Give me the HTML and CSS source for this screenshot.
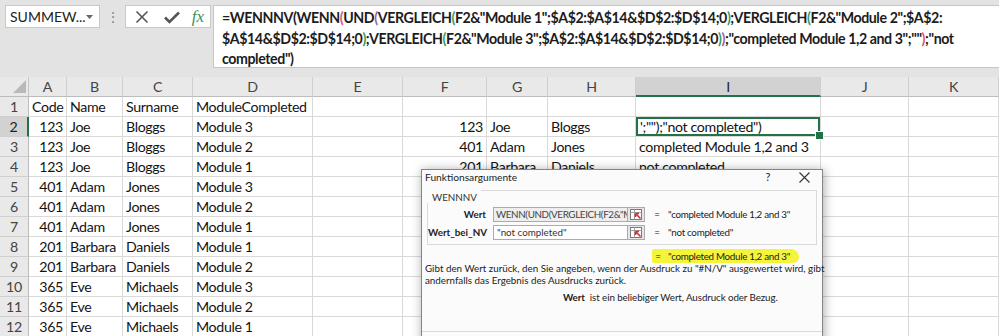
FILE: index.html
```html
<!DOCTYPE html>
<html lang="de">
<head>
<meta charset="utf-8">
<title>Excel WENNNV</title>
<link rel="stylesheet" href="styles.css">
</head>
<body>
<div class="app">
  <div class="topbar">
    <div class="namebox"><span>SUMMEW...</span><svg width="7" height="4" viewBox="0 0 7 4"><path d="M0 0h7L3.5 4z" fill="#666"/></svg></div>
    <div class="grip">⋮</div>
    <div class="fxbtns">
      <svg class="ic" width="16" height="16" viewBox="0 0 16 16"><path d="M2.5 2.5L13.5 13.5M13.5 2.5L2.5 13.5" stroke="#555" stroke-width="1.6" fill="none"/></svg>
      <svg class="ic" width="18" height="16" viewBox="0 0 18 16"><path d="M2 8.5L6.5 13L16 3.5" stroke="#555" stroke-width="2.6" fill="none"/></svg>
      <span class="fx">fx</span>
    </div>
    <div class="formula">=WENNNV(WENN<span class="p1">(</span>UND<span class="p2">(</span>VERGLEICH<span class="p3">(</span>F2&amp;"Module 1";$A$2:$A$14&amp;$D$2:$D$14;0<span class="p3">)</span>;VERGLEICH<span class="p3">(</span>F2&amp;"Module 2";$A$2:<br>$A$14&amp;$D$2:$D$14;0<span class="p3">)</span>;VERGLEICH<span class="p3">(</span>F2&amp;"Module 3";$A$2:$A$14&amp;$D$2:$D$14;0<span class="p3">)</span><span class="p2">)</span>;"completed Module 1,2 and 3";""<span class="p1">)</span>;"not<br>completed")</div>
  </div>

  <div class="sheet">
    <div class="corner"><svg width="28" height="19" viewBox="0 0 28 19"><path d="M13 16H26V3z" fill="#b9b9b9"/></svg></div>
    <div class="ch">A</div><div class="ch">B</div><div class="ch">C</div><div class="ch">D</div><div class="ch">E</div><div class="ch">F</div><div class="ch">G</div><div class="ch">H</div><div class="ch selc">I</div><div class="ch">J</div><div class="ch">K</div>

    <div class="rh">1</div><div>Code</div><div>Name</div><div>Surname</div><div>ModuleCompleted</div><div></div><div></div><div></div><div></div><div></div><div></div><div></div>
    <div class="rh selr">2</div><div class="n">123</div><div>Joe</div><div>Bloggs</div><div>Module 3</div><div></div><div class="n">123</div><div>Joe</div><div>Bloggs</div><div class="active">';"");"not completed")</div><div></div><div></div>
    <div class="rh">3</div><div class="n">123</div><div>Joe</div><div>Bloggs</div><div>Module 2</div><div></div><div class="n">401</div><div>Adam</div><div>Jones</div><div>completed Module 1,2 and 3</div><div></div><div></div>
    <div class="rh">4</div><div class="n">123</div><div>Joe</div><div>Bloggs</div><div>Module 1</div><div></div><div class="n">201</div><div>Barbara</div><div>Daniels</div><div>not completed</div><div></div><div></div>
    <div class="rh">5</div><div class="n">401</div><div>Adam</div><div>Jones</div><div>Module 3</div><div></div><div></div><div></div><div></div><div></div><div></div><div></div>
    <div class="rh">6</div><div class="n">401</div><div>Adam</div><div>Jones</div><div>Module 2</div><div></div><div></div><div></div><div></div><div></div><div></div><div></div>
    <div class="rh">7</div><div class="n">401</div><div>Adam</div><div>Jones</div><div>Module 1</div><div></div><div></div><div></div><div></div><div></div><div></div><div></div>
    <div class="rh">8</div><div class="n">201</div><div>Barbara</div><div>Daniels</div><div>Module 1</div><div></div><div></div><div></div><div></div><div></div><div></div><div></div>
    <div class="rh">9</div><div class="n">201</div><div>Barbara</div><div>Daniels</div><div>Module 2</div><div></div><div></div><div></div><div></div><div></div><div></div><div></div>
    <div class="rh">10</div><div class="n">365</div><div>Eve</div><div>Michaels</div><div>Module 3</div><div></div><div></div><div></div><div></div><div></div><div></div><div></div>
    <div class="rh">11</div><div class="n">365</div><div>Eve</div><div>Michaels</div><div>Module 2</div><div></div><div></div><div></div><div></div><div></div><div></div><div></div>
    <div class="rh">12</div><div class="n">365</div><div>Eve</div><div>Michaels</div><div>Module 1</div><div></div><div></div><div></div><div></div><div></div><div></div><div></div>
  </div>

  <div class="dialog">
    <div class="dtitle"><span class="dname">Funktionsargumente</span><span class="dq">?</span><span class="dx"><svg width="11" height="11" viewBox="0 0 11 11"><path d="M0.5 0.5L10.5 10.5M10.5 0.5L0.5 10.5" stroke="#333" stroke-width="1.1" fill="none"/></svg></span></div>
    <div class="group">
      <div class="ghead"><span class="gtext">WENNNV</span><span class="gline"></span></div>
      <div class="arg">
        <span class="lbl">Wert</span>
        <div class="inp dis">WENN(UND(VERGLEICH(F2&amp;"M</div>
        <div class="refbtn"><svg width="12" height="11" viewBox="0 0 12 11"><rect x="0.5" y="0.5" width="11" height="10" fill="#fff" stroke="#7a7a7a"/><path d="M0.5 3.5h11M4.5 0.5v10" stroke="#a0a0a0"/><path d="M10.5 9.5L5.5 4.5M5.5 4.5h3.5M5.5 4.5v3.5" stroke="#d0312d" stroke-width="1.6" fill="none"/></svg></div>
        <span class="eq">=</span><span class="val">"completed Module 1,2 and 3"</span>
      </div>
      <div class="arg">
        <span class="lbl">Wert_bei_NV</span>
        <div class="inp">"not completed"</div>
        <div class="refbtn"><svg width="12" height="11" viewBox="0 0 12 11"><rect x="0.5" y="0.5" width="11" height="10" fill="#fff" stroke="#7a7a7a"/><path d="M0.5 3.5h11M4.5 0.5v10" stroke="#a0a0a0"/><path d="M10.5 9.5L5.5 4.5M5.5 4.5h3.5M5.5 4.5v3.5" stroke="#d0312d" stroke-width="1.6" fill="none"/></svg></div>
        <span class="eq">=</span><span class="val">"not completed"</span>
      </div>
    </div>
    <div class="result"><span class="hl"><span class="eq2">=</span>"completed Module 1,2 and 3"</span></div>
    <div class="desc">Gibt den Wert zurück, den Sie angeben, wenn der Ausdruck zu "#N/V" ausgewertet wird, gibt<br>andernfalls das Ergebnis des Ausdrucks zurück.</div>
    <div class="argdesc"><b>Wert</b><span class="argtxt">ist ein beliebiger Wert, Ausdruck oder Bezug.</span></div>
    <div class="sep"></div>
  </div>
</div>
</body>
</html>
```
FILE: styles.css
```css
* { box-sizing: border-box; }
html, body { margin: 0; padding: 0; }
body { width: 999px; height: 336px; overflow: hidden; background: #fff; font-family: Lato, "Noto Sans", sans-serif; }
.app { position: relative; width: 999px; height: 336px; overflow: hidden; }

/* formula bar area */
.topbar { height: 77px; background: #e3e3e3; display: flex; align-items: flex-start; padding: 5px 0 0 5px; }
.namebox { width: 95px; height: 23px; background: #fff; border: 1px solid #c9c9c9; display: flex; align-items: center; justify-content: space-between; padding: 0 6px 0 4px; font-size: 14px; color: #222; }
.grip { width: 25px; text-align: center; color: #8a8a8a; font-size: 14px; line-height: 23px; }
.fxbtns { width: 86px; height: 23px; background: #fff; border: 1px solid #c9c9c9; display: flex; align-items: center; justify-content: space-between; padding: 0 6px 0 8px; }
.fxbtns .ic + .ic { margin-left: 2px; }
.fx { font-family: "Liberation Serif", serif; font-style: italic; font-size: 17px; color: #3b8f5e; line-height: 18px; }
.formula { margin-left: 2px; flex: 1; height: 63px; background: #fff; border: 1px solid #c6c6c6; border-right: none; padding: 2px 0 0 8px; font-weight: 700; font-size: 14.2px; line-height: 20.5px; white-space: nowrap; color: #1c1c1c; letter-spacing: -0.42px; }
.p1 { color: #d4587a; }
.p2 { color: #9462b3; }
.p3 { color: #3e9a5a; }

/* sheet */
.sheet { display: grid; grid-template-columns: 29px 38px 56px 70px 120px 90px 84px 61px 88px 185px 88px 90px; grid-auto-rows: 20px; font-size: 14.2px; letter-spacing: -0.35px; }
.sheet > div { border-right: 1px solid #d9d9d9; border-bottom: 1px solid #d9d9d9; padding: 0 3px; line-height: 19px; white-space: nowrap; overflow: hidden; color: #141414; }
.sheet > .corner { background: #e9e9e9; border-right-color: #c6c6c6; border-bottom-color: #bcbcbc; padding: 0; }
.sheet > .ch { background: #e9e9e9; text-align: center; color: #444; border-right-color: #cfcfcf; border-bottom-color: #bcbcbc; }
.sheet > .selc { background: #d2d2d2; border-bottom: 2px solid #217346; color: #222; }
.sheet > .rh { background: #e9e9e9; text-align: center; color: #444; padding: 0; border-right-color: #bcbcbc; border-bottom-color: #cfcfcf; }
.sheet > .selr { background: #d2d2d2; border-right: 2px solid #217346; color: #222; }
.sheet > .n { text-align: right; }
.sheet > .active { position: relative; overflow: visible; box-shadow: inset 0 0 0 2px #217346; padding-left: 4px; }
.sheet > .active::after { content: ""; position: absolute; right: -4px; bottom: -4px; width: 7px; height: 7px; background: #217346; border: 1px solid #fff; }

/* dialog */
.dialog { position: absolute; left: 421px; top: 169px; width: 402px; height: 190px; background: #fbfbfb; border: 1px solid #858585; box-shadow: 1px 1px 10px rgba(0,0,0,0.35); font-family: Lato, "Noto Sans", sans-serif; font-size: 9.8px; color: #222; }
.dtitle { height: 20px; display: flex; align-items: flex-start; padding: 1px 6px 0 3px; line-height: 12px; font-size: 10.2px; }
.dname { flex: 1; }
.dq { width: 20px; text-align: center; font-size: 11px; }
.dx { width: 24px; margin-left: 14px; display: flex; justify-content: center; padding-top: 1px; }
.group { margin: 0 5px; height: 55px; border: 1px solid #dadada; border-top: none; }
.ghead { display: flex; margin-left: -1px; margin-right: -1px; height: 13px; }
.gtext { padding: 1px 4px 0 5px; line-height: 12px; background: #fbfbfb; color: #333; }
.gline { flex: 1; border-top: 1px solid #dadada; }
.arg { display: flex; align-items: center; height: 15px; margin-top: 4px; line-height: 13px; }
.arg + .arg { margin-top: 3px; }
.lbl { width: 58px; text-align: right; font-weight: 700; margin-right: 7px; }
.inp { width: 135px; height: 15px; border: 1px solid #ababab; background: #fff; padding: 0 3px; overflow: hidden; white-space: nowrap; color: #333; }
.inp.dis { background: #eeeeee; color: #444; letter-spacing: -0.35px; padding: 0 2px; }
.refbtn { width: 17px; height: 15px; border: 1px solid #ababab; border-left: none; background: #e6e6e6; display: flex; align-items: center; justify-content: center; }
.eq { margin-left: 9px; width: 6px; text-align: center; }
.val { margin-left: 8px; white-space: nowrap; letter-spacing: -0.3px; }
.result { margin-top: 4px; height: 14px; padding-left: 230px; line-height: 12px; }
.hl { display: inline-block; background: #f4f43a; padding: 1px 9px 1px 1px; border-radius: 3px 9px 7px 2px; white-space: nowrap; letter-spacing: -0.3px; }
.eq2 { display: inline-block; width: 6px; text-align: center; margin: 0 7px 0 2px; }
.desc { padding-left: 3px; line-height: 11.5px; white-space: nowrap; }
.argdesc { margin-top: 5px; padding-left: 141px; line-height: 12px; white-space: nowrap; letter-spacing: -0.1px; }
.argdesc b { font-weight: 700; }
.argtxt { margin-left: 5px; }
.sep { margin: 28px 0 0 0; border-top: 1px solid #dadada; }
```
